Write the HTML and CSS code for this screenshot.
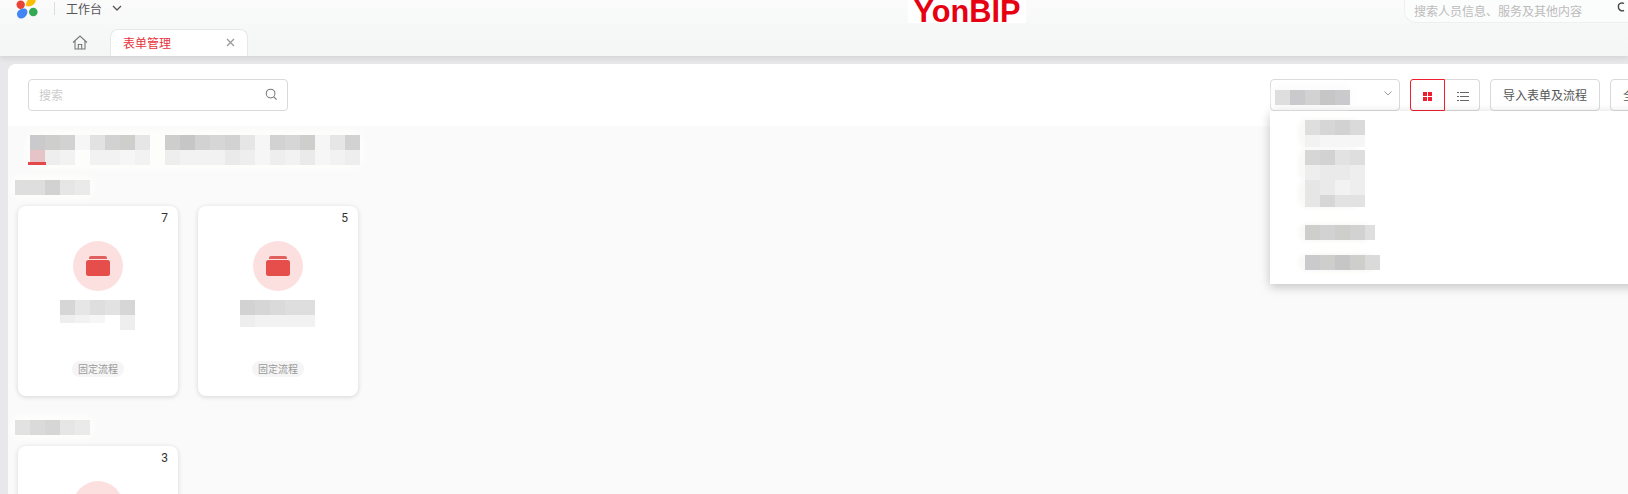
FILE: index.html
```html
<!DOCTYPE html>
<html lang="zh-CN">
<head>
    <meta charset="UTF-8">
    <meta name="viewport" content="width=device-width, initial-scale=1.0">
    <title>表单管理</title>
    <link rel="stylesheet" href="styles.css">
</head>
<body>
    <header class="header">
        <div class="topbar">
            <svg class="brand" width="26" height="20" viewBox="0 0 26 20">
                <circle cx="5.700" cy="4.700" r="4.200" fill="#ea4335"/>
                <path d="M11 4C12 0 15 -3 19 -3C22 -3 21 3 18 5C15 7 10 7 11 4Z" fill="#fbbc05"/>
                <path d="M2 14C2 11 5 8.500 9 8.500C12 8.500 13 11 12 14C11 17 8 19 5 18.500C3 18 2 16 2 14Z" fill="#4285f4"/>
                <circle cx="18.300" cy="12" r="4.300" fill="#34a853"/>
            </svg>
            <span class="divider"></span>
            <span class="workspace">工作台</span>
            <svg class="workspace-arrow" width="10" height="6" viewBox="0 0 10 6"><path d="M1 1l4 4 4-4" fill="none" stroke="#555" stroke-width="1.300"/></svg>
            <div class="logo"><span>YonBIP</span></div>
            <div class="global-search">
                <span>搜索人员信息、服务及其他内容</span>
                <svg width="8" height="12" viewBox="0 0 8 12"><path d="M7 2.500A4 4 0 0 0 1.500 4v3A4 4 0 0 0 7 9.500" fill="none" stroke="#444" stroke-width="1.400"/></svg>
            </div>
        </div>
        <div class="tabbar">
            <svg class="home" width="16" height="15" viewBox="0 0 16 15">
                <path d="M1 7.500L8 1l7 6.500M3 6v8h10V6M6.300 14V9.500h3.400V14" fill="none" stroke="#777" stroke-width="1.100"/>
            </svg>
            <div class="tab">
                <span>表单管理</span>
                <svg width="9" height="9" viewBox="0 0 9 9"><path d="M1 1l7 7M8 1l-7 7" stroke="#999" stroke-width="1.300"/></svg>
            </div>
        </div>
    </header>

    <main class="panel">
        <div class="toolbar">
            <div class="search-box">
                <span>搜索</span>
                <svg width="13" height="13" viewBox="0 0 14 14"><circle cx="6" cy="6" r="4.700" fill="none" stroke="#777" stroke-width="1.100"/><path d="M9.500 9.500l3 3" stroke="#777" stroke-width="1.200"/></svg>
            </div>
            <div class="actions">
                <div class="selector">
                    <div class="px-row smudge"><i class="de"></i><i class="ca"></i><i class="d2"></i><i class="c6"></i><i class="ca"></i></div>
                    <svg class="selector-arrow" width="8" height="5" viewBox="0 0 8 5"><path d="M.5.500L4 4 7.500.500" fill="none" stroke="#999"/></svg>
                    <div class="dropdown">
                        <div class="px-block first soft">
                            <div class="px-row"><i class="de"></i><i class="d6"></i><i class="d2"></i><i class="da"></i></div>
                            <div class="px-row short"><i class="f2"></i><i class="f6"></i><i class="f6"></i><i class="f6"></i></div>
                        </div>
                        <div class="px-block second soft">
                            <div class="px-row"><i class="d6"></i><i class="d2"></i><i class="e2"></i><i class="de"></i></div>
                            <div class="px-row"><i class="ee"></i><i class="ea"></i><i class="ea"></i><i class="ee"></i></div>
                        </div>
                        <div class="px-block soft">
                            <div class="px-row"><i class="e6"></i><i class="ea"></i><i class="f2"></i><i class="ee"></i></div>
                            <div class="px-row short"><i class="e6"></i><i class="d6"></i><i class="e2"></i><i class="e2"></i></div>
                        </div>
                        <div class="px-block gap-lg">
                            <div class="px-row soft wide"><i class="ce"></i><i class="d2"></i><i class="ce"></i><i class="d2"></i><i class="de wide-half"></i></div>
                        </div>
                        <div class="px-block gap-md">
                            <div class="px-row soft widest"><i class="ca"></i><i class="ce"></i><i class="c6"></i><i class="ce"></i><i class="da"></i></div>
                        </div>
                    </div>
                </div>
                <div class="view-toggle">
                    <button class="view-btn active">
                        <svg width="9" height="9" viewBox="0 0 9 9" fill="#ee1f2f"><rect width="4" height="4"/><rect x="5" width="4" height="4"/><rect y="5" width="4" height="4"/><rect x="5" y="5" width="4" height="4"/></svg>
                    </button>
                    <button class="view-btn list">
                        <svg width="12" height="9" viewBox="0 0 12 9" fill="#666"><rect y="0" width="2" height="1"/><rect x="3" y="0" width="9" height="1"/><rect y="4" width="2" height="1"/><rect x="3" y="4" width="9" height="1"/><rect y="8" width="2" height="1"/><rect x="3" y="8" width="9" height="1"/></svg>
                    </button>
                </div>
                <button class="btn">导入表单及流程</button>
                <button class="btn btn-cut">全部导出</button>
            </div>
        </div>

        <div class="content">
            <div class="categories smudge">
                <div class="px-row"><i class="ca"></i><i class="ce"></i><i class="d2"></i><i class="f6"></i><i class="e2"></i><i class="d2"></i><i class="ce"></i><i class="e6"></i><i></i><i class="ce"></i><i class="c6"></i><i class="d2"></i><i class="d6"></i><i class="d2"></i><i class="e6"></i><i class="f6"></i><i class="d2"></i><i class="d6"></i><i class="ce"></i><i class="f6"></i><i class="e6"></i><i class="d2"></i></div>
                <div class="px-row"><i class="pink"></i><i class="ee"></i><i class="f2"></i><i></i><i class="f2"></i><i class="f2"></i><i class="f6"></i><i class="f2"></i><i></i><i class="ee"></i><i class="f2"></i><i class="f2"></i><i class="f2"></i><i class="ea"></i><i class="ee"></i><i class="f6"></i><i class="ee"></i><i class="f2"></i><i class="ea"></i><i class="f6"></i><i class="f2"></i><i class="ee"></i></div>
                <span class="underline"></span>
            </div>

            <div class="px-row group-title smudge"><i class="de"></i><i class="de"></i><i class="d2"></i><i class="e6"></i><i class="ea"></i></div>
            <div class="card-list">
                <div class="card">
                    <span class="count">7</span>
                    <div class="circle">
                        <svg width="24" height="20" viewBox="0 0 24 20"><path d="M3 3V2a2 2 0 0 1 2-2h14a2 2 0 0 1 2 2v1z" fill="#e0605e"/><rect y="4" width="24" height="16" rx="2.500" fill="#e54e4b"/></svg>
                    </div>
                    <div class="card-name">
                        <div class="px-row"><i class="d6"></i><i class="e6"></i><i class="de"></i><i class="e2"></i><i class="d6"></i></div>
                        <div class="px-row uneven"><i class="ee"></i><i class="f2"></i><i class="f6"></i><i></i><i class="ee"></i></div>
                    </div>
                    <span class="tag">固定流程</span>
                </div>
                <div class="card">
                    <span class="count">5</span>
                    <div class="circle">
                        <svg width="24" height="20" viewBox="0 0 24 20"><path d="M3 3V2a2 2 0 0 1 2-2h14a2 2 0 0 1 2 2v1z" fill="#e0605e"/><rect y="4" width="24" height="16" rx="2.500" fill="#e54e4b"/></svg>
                    </div>
                    <div class="card-name">
                        <div class="px-row"><i class="d2"></i><i class="d6"></i><i class="da"></i><i class="de"></i><i class="de"></i></div>
                        <div class="px-row short"><i class="ee"></i><i class="f2"></i><i class="f2"></i><i class="f2"></i><i class="f2"></i></div>
                    </div>
                    <span class="tag">固定流程</span>
                </div>
            </div>

            <div class="px-row group-title second smudge"><i class="e2"></i><i class="da"></i><i class="d6"></i><i class="e6"></i><i class="ea"></i></div>
            <div class="card-list">
                <div class="card">
                    <span class="count">3</span>
                    <div class="circle">
                        <svg width="24" height="20" viewBox="0 0 24 20"><path d="M3 3V2a2 2 0 0 1 2-2h14a2 2 0 0 1 2 2v1z" fill="#e0605e"/><rect y="4" width="24" height="16" rx="2.500" fill="#e54e4b"/></svg>
                    </div>
                </div>
            </div>
        </div>
    </main>
</body>
</html>
```

FILE: styles.css
```css
* {
    box-sizing: border-box;
}

html, body {
    height: 100%;
}

body {
    margin: 0;
    overflow: hidden;
    background-color: #e8e8ea;
    font-family: "Noto Sans CJK SC", "Liberation Sans", sans-serif;
    font-size: 12px;
    color: #555;
}

/* header */
.header {
    height: 56px;
    background: linear-gradient(#fafbfa, #f3f6f5);
    box-shadow: 0 2px 6px rgba(0, 0, 0, 0.1);
}

.topbar {
    height: 28px;
    display: flex;
    align-items: flex-start;
}

.topbar > * {
    flex-shrink: 0;
}

.brand {
    margin-left: 15px;
}

.divider {
    width: 1px;
    height: 13px;
    margin: 2px 11px 0 13px;
    background-color: #ddd;
}

.workspace {
    line-height: 17px;
    white-space: nowrap;
    color: #555;
}

.workspace-arrow {
    margin: 5px 0 0 10px;
}

.logo {
    width: 118px;
    height: 23px;
    margin-left: 786px;
    overflow: hidden;
    background-color: #fff;
    text-align: center;
}

.logo span {
    display: block;
    margin-top: -9px;
    font-family: "Liberation Sans", sans-serif;
    font-size: 32px;
    line-height: 40px;
    font-weight: bold;
    color: #e60012;
    transform: scaleX(0.96);
}

.global-search {
    width: 224px;
    height: 23px;
    margin-left: 378px;
    padding: 0 0 2px 9px;
    display: flex;
    align-items: center;
    background-color: #fbfcfc;
    border: 1px solid #eef0ef;
    border-top: none;
    border-right: none;
    border-radius: 0 0 0 12px;
    white-space: nowrap;
    color: #bbb;
}

.global-search svg {
    margin: -6px 0 0 35px;
    flex-shrink: 0;
}

.tabbar {
    height: 28px;
    display: flex;
    align-items: flex-end;
}

.home {
    margin: 0 0 6px 72px;
}

.tab {
    width: 138px;
    height: 27px;
    margin-left: 22px;
    padding: 0 12px 2px 12px;
    display: flex;
    align-items: center;
    justify-content: space-between;
    background-color: #fff;
    border: 1px solid #e6e8e8;
    border-bottom: none;
    border-radius: 8px 8px 0 0;
    color: #e8323c;
}

/* panel */
.panel {
    margin: 8px 0 0 8px;
    height: 430px;
    overflow: hidden;
    background-color: #fafafa;
    border-radius: 8px 0 0 0;
}

.toolbar {
    height: 62px;
    padding: 15px 0 0 20px;
    display: flex;
    align-items: flex-start;
    background-color: #fff;
}

.search-box {
    width: 260px;
    height: 32px;
    padding: 0 9px 2px 10px;
    display: flex;
    align-items: center;
    justify-content: space-between;
    flex-shrink: 0;
    border: 1px solid #d9d9d9;
    border-radius: 4px;
    color: #ccc;
}

.actions {
    margin-left: 982px;
    display: flex;
    flex-shrink: 0;
    gap: 10px;
}

.selector {
    position: relative;
    width: 130px;
    height: 32px;
    padding: 10px 0 0 4px;
    display: flex;
    align-items: flex-start;
    border: 1px solid #d9d9d9;
    border-radius: 4px;
}

.selector-arrow {
    margin: 1px 0 0 34px;
}

.dropdown {
    position: absolute;
    top: 31px;
    left: -1px;
    width: 380px;
    height: 173px;
    padding-left: 35px;
    z-index: 2;
    background-color: #fff;
    box-shadow: 0 3px 10px rgba(0, 0, 0, 0.22);
}

.px-block.first {
    margin-top: 9px;
}

.px-block.second {
    margin-top: 3px;
}

.px-block.gap-lg {
    margin-top: 18px;
}

.px-block.gap-md {
    margin-top: 15px;
}

.soft {
    width: 60px;
    border-radius: 8px;
    background-color: #f9f9f8;
    box-shadow: -5px 0 4px 2px #f9f9f8;
}

.soft.wide {
    width: 70px;
}

.soft.widest {
    width: 75px;
}

.view-toggle {
    display: flex;
}

.view-btn {
    width: 35px;
    height: 32px;
    padding: 2px 0 0;
    background-color: #fff;
    border: 1px solid #d9d9d9;
    border-left: none;
    border-radius: 0 4px 4px 0;
}

.view-btn.list {
    padding: 2px 0 0 2px;
}

.view-btn.active {
    position: relative;
    border: 1px solid #ee1f2f;
    border-radius: 3px 0 0 3px;
}

.btn {
    width: 110px;
    height: 32px;
    padding: 0 0 2px;
    flex-shrink: 0;
    background-color: #fff;
    border: 1px solid #d9d9d9;
    border-radius: 4px;
    font-family: inherit;
    font-size: 12px;
    white-space: nowrap;
    color: #555;
}

.btn-cut {
    padding-left: 12px;
    text-align: left;
}

/* mosaic blocks */
.px-row {
    display: flex;
}

.px-row i {
    width: 15px;
    height: 15px;
    flex-shrink: 0;
}

.px-row.short i {
    height: 12px;
}

.px-row.uneven i {
    height: 8px;
}

.px-row.uneven i:last-child {
    height: 15px;
}

.px-row i.wide-half {
    width: 10px;
}

.smudge {
    border-radius: 10px;
    box-shadow: 0 0 5px 5px #fdfdfc;
    background-color: #fdfdfc;
}

.selector .smudge {
    box-shadow: 0 -1px 6px 5px #fcfcfc;
}

.c6 { background-color: #c6c6c6; }
.ca { background-color: #cacacc; }
.ce { background-color: #cececc; }
.d2 { background-color: #d2d2d2; }
.d6 { background-color: #d6d6d6; }
.da { background-color: #dadada; }
.de { background-color: #dedede; }
.e2 { background-color: #e2e2e2; }
.e6 { background-color: #e6e6e6; }
.ea { background-color: #eaeaea; }
.ee { background-color: #eeeeee; }
.f2 { background-color: #f2f2f2; }
.f6 { background-color: #f6f6f6; }
.pink { background-color: #e6c3c7; }

/* content */
.content {
    padding: 9px 0 0 10px;
}

.categories {
    position: relative;
    width: 330px;
    margin-left: 12px;
}

.underline {
    position: absolute;
    left: -2px;
    bottom: 0;
    width: 18px;
    height: 3px;
    background-color: #e5484a;
}

.group-title {
    width: 75px;
    margin: 15px 0 11px -3px;
}

.group-title.second {
    margin-top: 24px;
}

.card-list {
    display: flex;
    gap: 20px;
}

.card {
    position: relative;
    width: 160px;
    height: 190px;
    padding: 35px 0 19px;
    display: flex;
    flex-direction: column;
    align-items: center;
    background-color: #fff;
    border-radius: 8px;
    box-shadow: 0 1px 5px rgba(0, 0, 0, 0.15);
}

.count {
    position: absolute;
    top: 3px;
    right: 10px;
    font-family: "Roboto", sans-serif;
    font-size: 12px;
    line-height: 18px;
    color: #333;
}

.circle {
    width: 50px;
    height: 50px;
    display: flex;
    align-items: center;
    justify-content: center;
    flex-shrink: 0;
    background-color: #fbe0df;
    border-radius: 50%;
}

.card-name {
    align-self: flex-start;
    margin: 9px 0 0 42px;
}

.tag {
    width: 52px;
    height: 16px;
    margin-top: auto;
    background-color: #f5f5f5;
    border-radius: 8px;
    font-size: 10px;
    line-height: 16px;
    text-align: center;
    color: #999;
    white-space: nowrap;
}
```
